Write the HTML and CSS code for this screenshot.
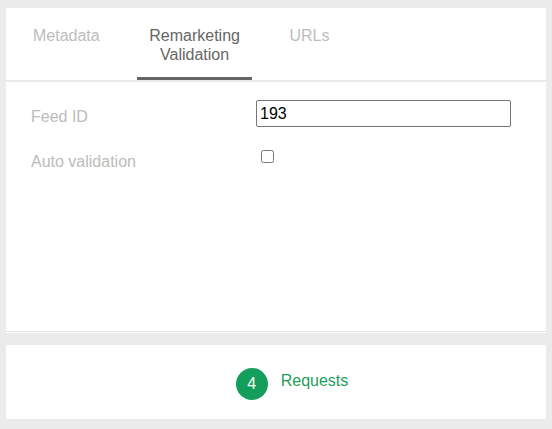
FILE: index.html
```html
<!DOCTYPE html>
<html>
<head>
<meta charset="utf-8">
<link rel="stylesheet" href="styles.css">
</head>
<body>
<div class="page">
  <div class="card main">
    <div class="tabs">
      <div class="tab">Metadata</div>
      <div class="tab active">Remarketing<br>Validation</div>
      <div class="tab">URLs</div>
    </div>
    <div class="sep"></div>
    <div class="form">
      <label class="label label-input">Feed ID</label>
      <input class="text-input" type="text" value="193">
      <label class="label label-check">Auto validation</label>
      <div class="check-cell"><input class="check" type="checkbox"></div>
    </div>
    <div class="foot-line"></div>
  </div>
  <div class="card requests">
    <span class="badge">4</span>
    <span class="req-text">Requests</span>
  </div>
</div>
</body>
</html>
```
FILE: styles.css
```css
html, body {
  margin: 0;
  padding: 0;
  background: #ebebeb;
  font-family: "Liberation Sans", Arial, sans-serif;
}
.page {
  padding: 8px 6px 10px;
  display: flex;
  flex-direction: column;
  gap: 12px;
}
.card {
  background: #fff;
}
.main {
  height: 325px;
  display: flex;
  flex-direction: column;
}
.tabs {
  display: flex;
  gap: 25px;
  padding-left: 15px;
  align-items: flex-start;
}
.tab {
  font-size: 16px;
  line-height: 19px;
  color: #bdbdbd;
  padding: 18px 12px 16px;
  text-align: center;
}
.tab.active {
  color: #666;
  padding: 18px 12.5px 13px;
  border-bottom: 3px solid #666;
}
.sep {
  height: 2px;
  background: #e9e9e9;
}
.form {
  flex: 1;
  display: grid;
  grid-template-columns: 225px 255px;
  row-gap: 23px;
  padding: 18px 0 0 25px;
  align-content: start;
  align-items: start;
}
.label {
  font-size: 16px;
  line-height: 20px;
  color: #bbbbbb;
}
.label-input {
  margin-top: 7px;
}
.label-check {
  margin-top: 2px;
  margin-bottom: -2px;
}
.text-input {
  box-sizing: border-box;
  width: 255px;
  height: 27px;
  margin: 0;
  border: 1px solid #767676;
  border-radius: 2px;
  padding: 1px 3px;
  font-family: "Liberation Sans", Arial, sans-serif;
  font-size: 16px;
  color: #000;
}
.check-cell {
  height: 13px;
}
.check {
  width: 13px;
  height: 13px;
  margin: 0 0 0 5px;
  display: block;
}
.foot-line {
  height: 1px;
  border-top: 1px solid #e3e3e3;
}
.requests {
  height: 74px;
  display: flex;
  align-items: center;
  justify-content: center;
  padding-left: 32px;
  gap: 13px;
}
.badge {
  width: 32px;
  height: 32px;
  margin-top: 4px;
  border-radius: 50%;
  background: #139f5b;
  color: #fff;
  font-size: 16px;
  display: flex;
  align-items: center;
  justify-content: center;
}
.req-text {
  font-size: 16px;
  color: #1d9e5c;
  margin-bottom: 3px;
}
```
